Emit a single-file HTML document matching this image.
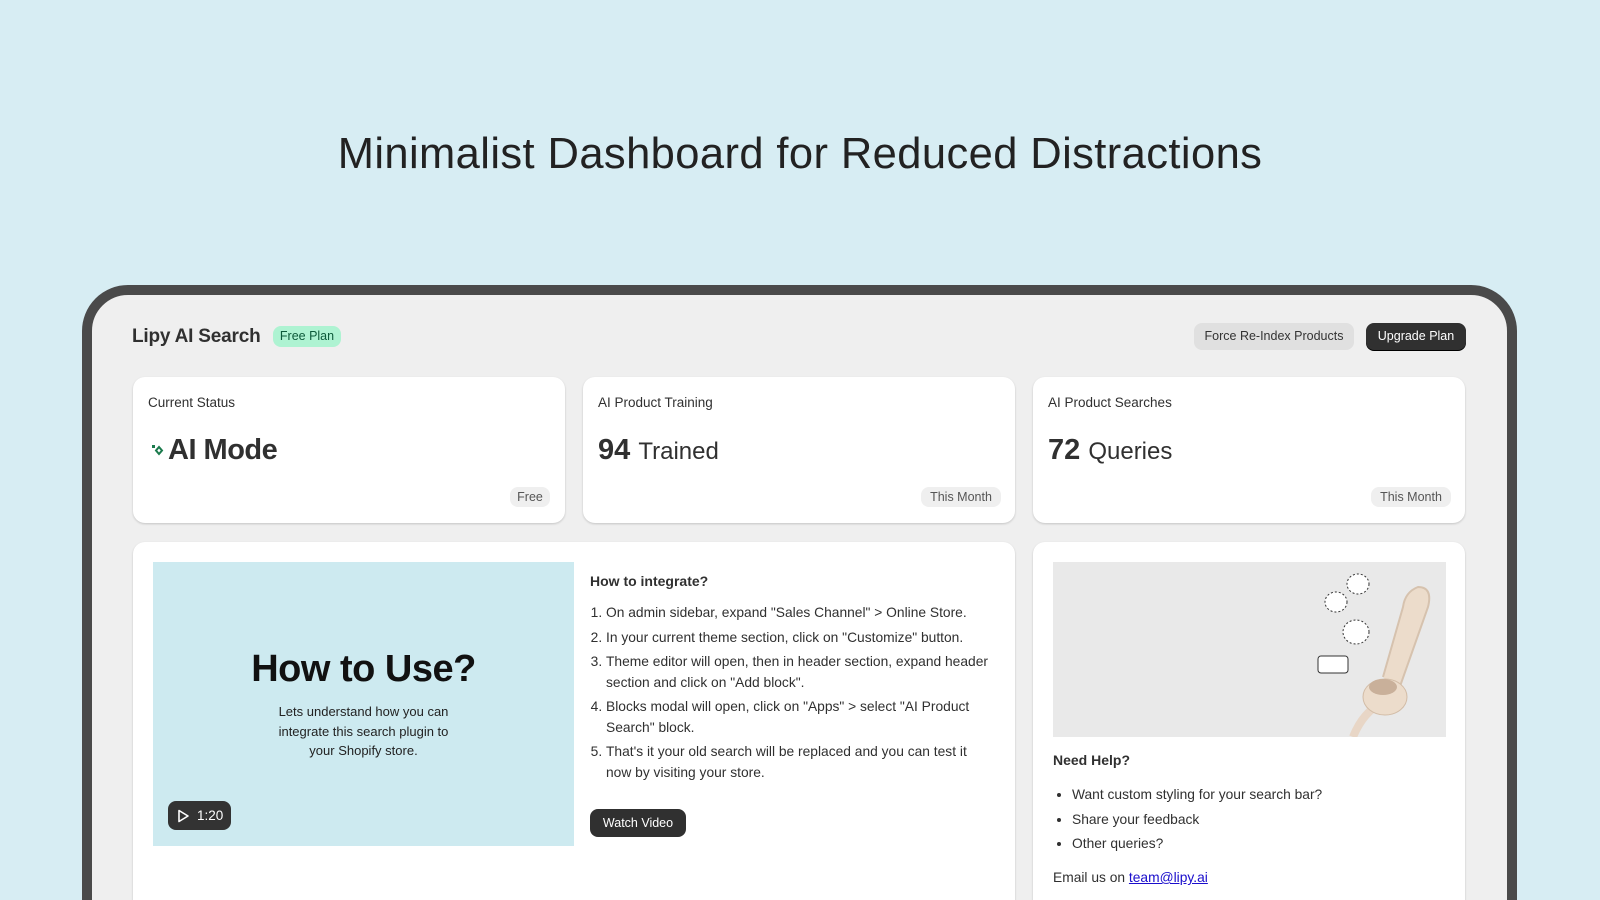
<!DOCTYPE html>
<html><head><meta charset="utf-8"><style>
*{margin:0;padding:0;box-sizing:border-box}
html,body{width:1600px;height:900px;overflow:hidden;background:#d7edf3;font-family:"Liberation Sans",sans-serif;color:#303030}
#wrap{position:relative;width:1600px;height:900px;overflow:hidden}
.abs{position:absolute}
h1{position:absolute;left:0;width:1600px;top:130px;text-align:center;font-weight:400;font-size:43.5px;color:#222;letter-spacing:0.4px}
.frame{position:absolute;left:82px;top:285px;width:1435px;height:700px;border:10px solid #4a4a4a;border-radius:46px;background:#efefef}
.card{position:absolute;background:#fff;border-radius:12px;box-shadow:0 1px 2px rgba(0,0,0,.18)}
.lbl{position:absolute;font-size:13.5px;color:#303030}
.pill{position:absolute;background:#efefef;border-radius:8px;font-size:12.5px;color:#555;text-align:center;line-height:20px;height:20px}
.big{position:absolute;font-size:29px;color:#303030}
.big b{font-weight:700}
ol,ul{position:absolute;font-size:13.8px;line-height:20.5px;color:#303030}
ol li{margin-bottom:4px}
.btn{position:absolute;border-radius:8px;font-size:12.5px;text-align:center}
</style></head><body><div id="wrap">
<h1>Minimalist Dashboard for Reduced Distractions</h1>
<div class="frame"></div>
<div class="abs" style="left:132px;top:326px;font-size:19px;font-weight:700;color:#303030;letter-spacing:-0.2px">Lipy AI Search</div>
<div class="abs" style="left:273px;top:326px;width:68px;height:21px;border-radius:8px;background:#aef3d2;color:#0d5a3a;font-size:12.5px;line-height:21px;text-align:center">Free Plan</div>
<div class="btn" style="left:1194px;top:323px;width:160px;height:27px;line-height:27px;background:#e0e0e0;color:#333">Force Re-Index Products</div>
<div class="btn" style="left:1366px;top:323px;width:100px;height:27px;line-height:27px;background:#303030;color:#fff;box-shadow:0 1px 0 #000">Upgrade Plan</div>

<div class="card" style="left:133px;top:377px;width:432px;height:146px"></div>
<div class="card" style="left:583px;top:377px;width:432px;height:146px"></div>
<div class="card" style="left:1033px;top:377px;width:432px;height:146px"></div>
<div class="lbl" style="left:148px;top:395px">Current Status</div>
<div class="lbl" style="left:598px;top:395px">AI Product Training</div>
<div class="lbl" style="left:1048px;top:395px">AI Product Searches</div>
<svg class="abs" style="left:150px;top:443px" width="16" height="16" viewBox="0 0 16 16"><path d="M9 4 L12 7.5 L9 11 L6 7.5Z" fill="none" stroke="#1a7a4c" stroke-width="2"/><rect x="2" y="2" width="3" height="3" fill="#1a7a4c"/></svg>
<div class="big" style="left:168px;top:434px;font-weight:700;letter-spacing:-0.5px">AI Mode</div>
<div class="big" style="left:598px;top:434px"><b>94</b> <span style="font-size:24px">Trained</span></div>
<div class="big" style="left:1048px;top:434px"><b>72</b> <span style="font-size:24px">Queries</span></div>
<div class="pill" style="left:510px;top:487px;width:40px">Free</div>
<div class="pill" style="left:921px;top:487px;width:80px">This Month</div>
<div class="pill" style="left:1371px;top:487px;width:80px">This Month</div>

<div class="card" style="left:133px;top:542px;width:882px;height:400px"></div>
<div class="card" style="left:1033px;top:542px;width:432px;height:400px"></div>
<div class="abs" style="left:153px;top:562px;width:421px;height:284px;background:#cdeaf0">
 <div class="abs" style="left:0;width:421px;top:86px;text-align:center;font-size:38px;font-weight:700;color:#111;letter-spacing:-0.5px">How to Use?</div>
 <div class="abs" style="left:0;width:421px;top:140px;text-align:center;font-size:13px;line-height:19.5px;color:#222">Lets understand how you can<br>integrate this search plugin to<br>your Shopify store.</div>
 <div class="abs" style="left:15px;top:239px;width:63px;height:29px;border-radius:8px;background:#333;color:#fff;font-size:13.5px;line-height:29px;padding-left:29px">1:20
  <svg class="abs" style="left:9px;top:8px" width="13" height="14" viewBox="0 0 13 14"><path d="M2 1.5 L11 7 L2 12.5Z" fill="none" stroke="#fff" stroke-width="1.6" stroke-linejoin="round"/></svg></div>
</div>
<div class="abs" style="left:590px;top:573px;font-size:14px;font-weight:700">How to integrate?</div>
<ol style="left:606px;top:603px;width:385px">
<li>On admin sidebar, expand "Sales Channel" &gt; Online Store.</li>
<li>In your current theme section, click on "Customize" button.</li>
<li>Theme editor will open, then in header section, expand header section and click on "Add block".</li>
<li>Blocks modal will open, click on "Apps" &gt; select "AI Product Search" block.</li>
<li>That's it your old search will be replaced and you can test it now by visiting your store.</li>
</ol>
<div class="btn" style="left:590px;top:809px;width:96px;height:28px;line-height:28px;background:#303030;color:#fff">Watch Video</div>

<div class="abs" style="left:1053px;top:562px;width:393px;height:175px;background:#e9e9e9;overflow:hidden">
<svg width="393" height="175" viewBox="0 0 393 175">
<path d="M300 175 Q310 150 330 140" stroke="#e8d6c6" stroke-width="8" fill="none"/>
<path d="M345 130 L375 45 Q380 25 365 25 Q352 30 350 45 L330 115" fill="#ecdccb" stroke="#d6c2ae" stroke-width="2"/>
<ellipse cx="332" cy="135" rx="22" ry="18" fill="#ecdccb" stroke="#d2bca6"/>
<ellipse cx="330" cy="125" rx="14" ry="8" fill="#c9b09a"/>
<ellipse cx="283" cy="40" rx="11" ry="10" fill="#fff" stroke="#333" stroke-dasharray="2 2"/>
<ellipse cx="305" cy="22" rx="11" ry="10" fill="#fff" stroke="#333" stroke-dasharray="2 2"/>
<ellipse cx="303" cy="70" rx="13" ry="12" fill="#fff" stroke="#333" stroke-dasharray="2 2"/>
<rect x="265" y="94" width="30" height="17" rx="3" fill="#fff" stroke="#333"/>
</svg></div>
<div class="abs" style="left:1053px;top:752px;font-size:14px;font-weight:700">Need Help?</div>
<ul style="left:1072px;top:783px;line-height:24.5px">
<li>Want custom styling for your search bar?</li>
<li>Share your feedback</li>
<li>Other queries?</li>
</ul>
<div class="abs" style="left:1053px;top:870px;font-size:13.8px">Email us on <span style="color:#1a0dcc;text-decoration:underline">team@lipy.ai</span></div>
</div></body></html>
